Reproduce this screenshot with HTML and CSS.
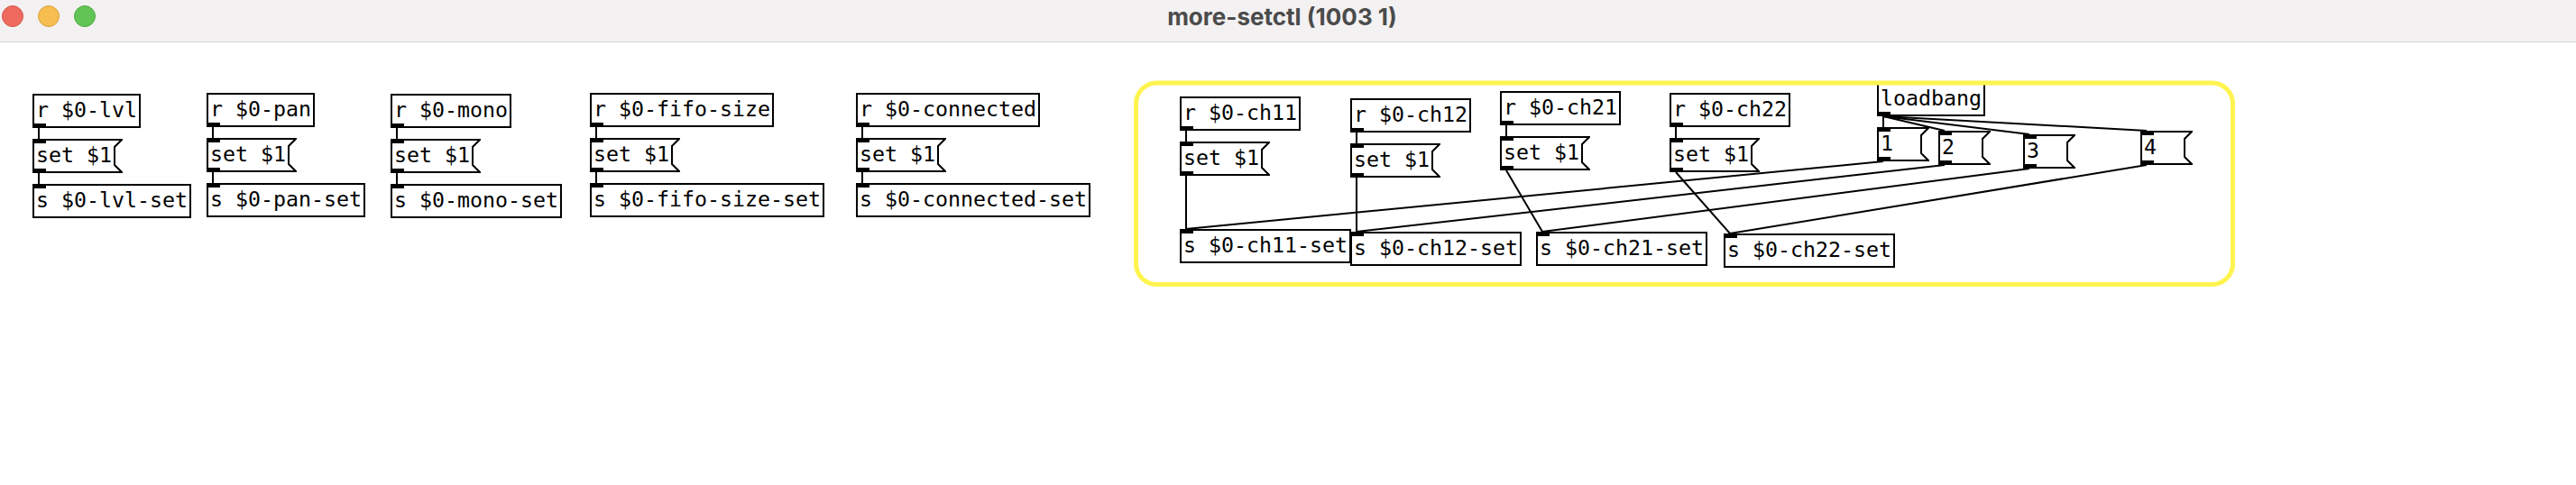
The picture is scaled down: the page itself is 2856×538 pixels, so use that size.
FILE: index.html
```html
<!DOCTYPE html>
<html lang="en">
<head>
    <meta charset="UTF-8">
    <title>more-setctl (1003 1)</title>
    <link rel="stylesheet" href="styles.css">
</head>
<body>

<div class="window">
    <div class="titlebar">
        <div class="lights">
            <span class="light red"></span>
            <span class="light yellow"></span>
            <span class="light green"></span>
        </div>
        <div class="title">more-setctl (1003 1)</div>
        <div></div>
    </div>

    <div class="canvas" id="canvas">
        <svg class="wires" id="wires" width="2856" height="491"></svg>
    </div>
</div>

<script>
    // pd zoom 2: every char is 14px wide, every box 38px high
    const CHAR_W = 14;
    const BOX_H = 38;

    // io: i = inlet, o = outlet
    const boxes = {
        lvlR:  { x: 36,  y: 57,  text: 'r $0-lvl', io: 'o' },
        lvlM:  { x: 36,  y: 107, text: 'set $1', io: 'io', msg: true },
        lvlS:  { x: 36,  y: 157, text: 's $0-lvl-set', io: 'i' },

        panR:  { x: 229, y: 56,  text: 'r $0-pan', io: 'o' },
        panM:  { x: 229, y: 106, text: 'set $1', io: 'io', msg: true },
        panS:  { x: 229, y: 156, text: 's $0-pan-set', io: 'i' },

        monoR: { x: 433, y: 57,  text: 'r $0-mono', io: 'o' },
        monoM: { x: 433, y: 107, text: 'set $1', io: 'io', msg: true },
        monoS: { x: 433, y: 157, text: 's $0-mono-set', io: 'i' },

        fifoR: { x: 654, y: 56,  text: 'r $0-fifo-size', io: 'o' },
        fifoM: { x: 654, y: 106, text: 'set $1', io: 'io', msg: true },
        fifoS: { x: 654, y: 156, text: 's $0-fifo-size-set', io: 'i' },

        connR: { x: 949, y: 56,  text: 'r $0-connected', io: 'o' },
        connM: { x: 949, y: 106, text: 'set $1', io: 'io', msg: true },
        connS: { x: 949, y: 156, text: 's $0-connected-set', io: 'i' },

        ch11R: { x: 1308, y: 60,  text: 'r $0-ch11', io: 'o' },
        ch11M: { x: 1308, y: 110, text: 'set $1', io: 'io', msg: true },
        ch11S: { x: 1308, y: 207, text: 's $0-ch11-set', io: 'i' },

        ch12R: { x: 1497, y: 62,  text: 'r $0-ch12', io: 'o' },
        ch12M: { x: 1497, y: 112, text: 'set $1', io: 'io', msg: true },
        ch12S: { x: 1497, y: 210, text: 's $0-ch12-set', io: 'i' },

        ch21R: { x: 1663, y: 54,  text: 'r $0-ch21', io: 'o' },
        ch21M: { x: 1663, y: 104, text: 'set $1', io: 'io', msg: true },
        ch21S: { x: 1703, y: 210, text: 's $0-ch21-set', io: 'i' },

        ch22R: { x: 1851, y: 56,  text: 'r $0-ch22', io: 'o' },
        ch22M: { x: 1851, y: 106, text: 'set $1', io: 'io', msg: true },
        ch22S: { x: 1911, y: 212, text: 's $0-ch22-set', io: 'i' },

        lb:    { x: 2081, y: 44,  text: 'loadbang', io: 'o' },
        m1:    { x: 2081, y: 94,  text: '1', io: 'io', msg: true, width: 3 },
        m2:    { x: 2149, y: 98,  text: '2', io: 'io', msg: true, width: 3 },
        m3:    { x: 2243, y: 102, text: '3', io: 'io', msg: true, width: 3 },
        m4:    { x: 2373, y: 98,  text: '4', io: 'io', msg: true, width: 3 }
    };

    const wires = [
        ['lvlR', 'lvlM'], ['lvlM', 'lvlS'],
        ['panR', 'panM'], ['panM', 'panS'],
        ['monoR', 'monoM'], ['monoM', 'monoS'],
        ['fifoR', 'fifoM'], ['fifoM', 'fifoS'],
        ['connR', 'connM'], ['connM', 'connS'],
        ['ch11R', 'ch11M'], ['ch11M', 'ch11S'],
        ['ch12R', 'ch12M'], ['ch12M', 'ch12S'],
        ['ch21R', 'ch21M'], ['ch21M', 'ch21S'],
        ['ch22R', 'ch22M'], ['ch22M', 'ch22S'],
        ['lb', 'm1'], ['lb', 'm2'], ['lb', 'm3'], ['lb', 'm4'],
        ['m1', 'ch11S'], ['m2', 'ch12S'], ['m3', 'ch21S'], ['m4', 'ch22S']
    ];

    function flagSvg(w) {
        const h = BOX_H;
        const pts = `1,1 ${w - 1},1 ${w - 9},9 ${w - 9},${h - 9} ${w - 1},${h - 1} 1,${h - 1}`;
        return `<svg class="flag" width="${w}" height="${h}"><polygon points="${pts}"/></svg>`;
    }

    function renderBoxes() {
        const canvas = document.getElementById('canvas');

        for (const id in boxes) {
            const b = boxes[id];
            const chars = b.width || b.text.length;
            b.w = chars * CHAR_W + 8 + (b.msg ? 8 : 0);

            const el = document.createElement('div');
            el.className = b.msg ? 'box msg' : 'box';
            el.style.left = b.x + 'px';
            el.style.top = b.y + 'px';
            el.style.width = b.w + 'px';

            let html = b.msg ? flagSvg(b.w) : '';
            html += `<span class="label">${b.text}</span>`;
            if (b.io.includes('i')) html += '<span class="port inlet"></span>';
            if (b.io.includes('o')) html += '<span class="port outlet"></span>';
            el.innerHTML = html;

            canvas.appendChild(el);
        }
    }

    function renderWires() {
        const svg = document.getElementById('wires');
        let html = '<rect class="group" x="1259.5" y="45" width="1216" height="223.5" rx="23" ry="23"/>';

        wires.forEach(([from, to]) => {
            const a = boxes[from];
            const b = boxes[to];
            html += `<line x1="${a.x + 7}" y1="${a.y + BOX_H}" x2="${b.x + 7}" y2="${b.y}"/>`;
        });

        svg.innerHTML = html;
    }

    renderBoxes();
    renderWires();
</script>

</body>
</html>
```

FILE: styles.css
```css
/* General Styles */
body {
    margin: 0;
    background-color: #fff;
    overflow: hidden;
    font-family: "DejaVu Sans Mono", monospace;
}

.window {
    width: 2856px;
    height: 538px;
    display: flex;
    flex-direction: column;
}

/* Title bar */
.titlebar {
    box-sizing: border-box;
    height: 47px;
    padding: 6px 0 0 2px;
    background-color: #f3f1f2;
    border-bottom: 1px solid #dad8d9;
    display: grid;
    grid-template-columns: 1fr auto 1fr;
    align-items: start;
}

.lights {
    display: flex;
    gap: 16px;
}

.light {
    width: 24px;
    height: 24px;
    border-radius: 50%;
    box-sizing: border-box;
    border: 1px solid;
}

.light.red {
    background-color: #ee6a5f;
    border-color: #d4574d;
}

.light.yellow {
    background-color: #f6be4f;
    border-color: #dca23f;
}

.light.green {
    background-color: #61c454;
    border-color: #4fa943;
}

.title {
    margin-right: 15px;
    font-family: Inter, "Liberation Sans", sans-serif;
    font-weight: 700;
    font-size: 26px;
    line-height: 25px;
    color: #4b4b4b;
}

/* Patch canvas */
.canvas {
    position: relative;
    flex: 1;
}

.box {
    position: absolute;
    box-sizing: border-box;
    height: 38px;
    padding: 0 2px;
    border: 2px solid #000;
    font-size: 23.25px;
    line-height: 32px;
    color: #000;
    white-space: pre;
}

.msg {
    border-color: transparent;
}

.label {
    position: relative;
}

.flag {
    position: absolute;
    left: -2px;
    top: -2px;
}

.flag polygon {
    fill: none;
    stroke: #000;
    stroke-width: 2;
}

.port {
    position: absolute;
    left: -2px;
    width: 15px;
    height: 5px;
    background-color: #000;
}

.inlet {
    top: -2px;
}

.outlet {
    bottom: -2px;
}

.wires {
    position: absolute;
    left: 0;
    top: 0;
    z-index: 2;
    pointer-events: none;
}

.wires line {
    stroke: #000;
    stroke-width: 2;
}

.wires .group {
    fill: none;
    stroke: #fff44f;
    stroke-width: 5;
}
```
